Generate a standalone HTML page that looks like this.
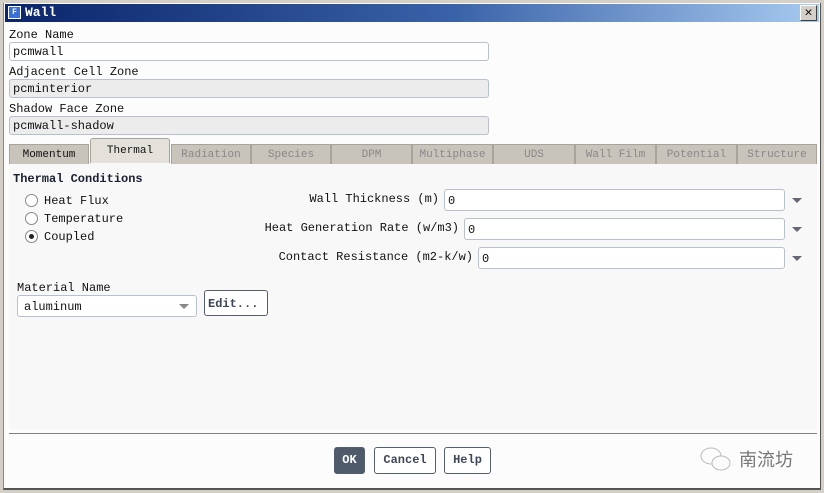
<!DOCTYPE html>
<html><head><style>
*{box-sizing:border-box;margin:0;padding:0}
body{width:824px;height:493px;overflow:hidden;background:#d4d0c8;font-family:"Liberation Mono",monospace;font-size:12px;color:#111;position:relative}
.win{position:absolute;left:3px;top:3px;width:818px;height:487px;background:#fcfcfc;border-left:1px solid #888;border-right:1px solid #555;border-bottom:2px solid #555}
.title{position:absolute;left:1px;top:1px;right:1px;height:18px;background:linear-gradient(90deg,#0a246a,#3a62a8 55%,#a6caf0)}
.title .ic{position:absolute;left:3px;top:2px;width:13px;height:13px;background:#3a6fd8;border:1px solid #fff;color:#fff;font-size:8px;font-weight:bold;text-align:center;line-height:11px}
.title .t{position:absolute;left:20px;top:1px;color:#fff;font-weight:bold;font-size:13px}
.x{position:absolute;right:2px;top:1px;width:17px;height:16px;background:#d4d0c8;border:1px solid;border-color:#fff #404040 #404040 #fff;font-weight:bold;font-size:13px;line-height:14px;text-align:center}
.a{position:absolute;white-space:pre}
.r{position:absolute;white-space:pre;text-align:right}
.f{position:absolute;border:1px solid #b8c0cc;border-radius:3px;background:#fff;padding-left:3px;line-height:18px}
.g{background:#ececec}
.tab{position:absolute;top:141px;height:20px;background:#c8c4bc;border:1px solid #a8a49c;border-bottom:none;color:#888;font-size:11px;text-align:center;line-height:20px}
.panel{position:absolute;left:5px;top:158px;width:808px;height:268px;background:#f8f8f8}
.rad{position:absolute;width:13px;height:13px;border:1px solid #888;border-radius:50%;background:#fff}
.arr{position:absolute;width:0;height:0;border-left:5px solid transparent;border-right:5px solid transparent;border-top:5px solid #667}
.btn{position:absolute;top:444px;height:27px;border:1px solid #555e6b;border-radius:3px;background:#fff;font-weight:bold;color:#3c4656;text-align:center;line-height:25px;font-size:12px}
</style></head><body>
<div class="win">
<div class="title"><div class="ic">F</div><div class="t">Wall</div><div class="x">✕</div></div>
<div class="a" style="left:5px;top:25px">Zone Name</div>
<div class="f" style="left:5px;top:39px;width:480px;height:19px">pcmwall</div>
<div class="a" style="left:5px;top:62px">Adjacent Cell Zone</div>
<div class="f g" style="left:5px;top:76px;width:480px;height:19px">pcminterior</div>
<div class="a" style="left:5px;top:99px">Shadow Face Zone</div>
<div class="f g" style="left:5px;top:113px;width:480px;height:19px">pcmwall-shadow</div>
<div class="panel"></div>
<div class="tab" style="left:5px;width:80px;color:#111">Momentum</div>
<div class="tab" style="left:86px;width:80px;top:135px;height:25px;background:#e4e1da;color:#111;border-radius:3px 3px 0 0;line-height:24px">Thermal</div>
<div class="tab" style="left:167px;width:80px">Radiation</div>
<div class="tab" style="left:247px;width:80px">Species</div>
<div class="tab" style="left:327px;width:81px">DPM</div>
<div class="tab" style="left:408px;width:81px">Multiphase</div>
<div class="tab" style="left:489px;width:82px">UDS</div>
<div class="tab" style="left:571px;width:81px">Wall Film</div>
<div class="tab" style="left:652px;width:81px">Potential</div>
<div class="tab" style="left:733px;width:80px">Structure</div>
<div class="a" style="left:9px;top:169px;font-weight:bold;color:#1a2030">Thermal Conditions</div>
<div class="rad" style="left:21px;top:191px"></div><div class="a" style="left:40px;top:191px">Heat Flux</div>
<div class="rad" style="left:21px;top:209px"></div><div class="a" style="left:40px;top:209px">Temperature</div>
<div class="rad" style="left:21px;top:227px"><div style="position:absolute;left:3px;top:3px;width:5px;height:5px;border-radius:50%;background:#222"></div></div><div class="a" style="left:40px;top:227px">Coupled</div>
<div class="r" style="right:381px;top:189px">Wall Thickness (m)</div>
<div class="f" style="left:440px;top:186px;width:341px;height:22px;line-height:22px">0</div>
<div class="arr" style="left:788px;top:195px"></div>
<div class="r" style="right:361px;top:218px">Heat Generation Rate (w/m3)</div>
<div class="f" style="left:460px;top:215px;width:321px;height:22px;line-height:22px">0</div>
<div class="arr" style="left:788px;top:224px"></div>
<div class="r" style="right:347px;top:247px">Contact Resistance (m2-k/w)</div>
<div class="f" style="left:474px;top:244px;width:307px;height:22px;line-height:22px">0</div>
<div class="arr" style="left:788px;top:253px"></div>
<div class="a" style="left:13px;top:278px">Material Name</div>
<div class="f" style="left:13px;top:292px;width:180px;height:22px;line-height:22px;padding-left:6px">aluminum</div>
<div class="arr" style="left:175px;top:301px;border-top-color:#888"></div>
<div class="f" style="left:200px;top:287px;width:64px;height:26px;border-color:#555e6b;font-weight:bold;line-height:26px;color:#3c4656">Edit...</div>
<div style="position:absolute;left:5px;top:430px;width:808px;height:1px;background:#808080"></div>
<div class="btn" style="left:330px;width:31px;background:#4f5b6b;color:#fff">OK</div>
<div class="btn" style="left:370px;width:62px">Cancel</div>
<div class="btn" style="left:440px;width:47px">Help</div>
<svg style="position:absolute;left:695px;top:443px" width="36" height="28" viewBox="0 0 36 28" fill="none" stroke="#bbb" stroke-width="1"><ellipse cx="12" cy="10" rx="10" ry="8"/><ellipse cx="22" cy="17" rx="9" ry="7" fill="#fcfcfc"/></svg>
<div class="a" style="left:735px;top:443px;font-family:'Noto Sans CJK SC',sans-serif;font-size:18px;color:#777">南流坊</div>
</div>
</body></html>
